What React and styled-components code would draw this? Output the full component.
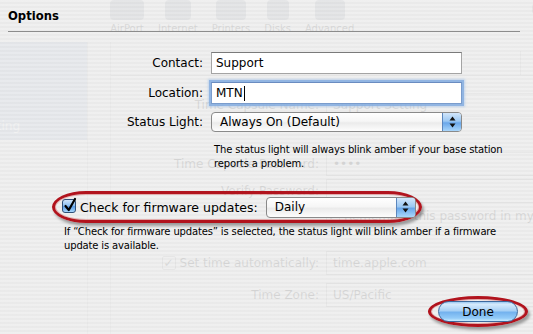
import React from 'react';
import styled, { createGlobalStyle } from 'styled-components';

const Global = createGlobalStyle`
  html, body { margin: 0; padding: 0; background: #ececec; }
  body { font-family: "DejaVu Sans", "Liberation Sans", sans-serif; }
`;

const Screen = styled.div`
  position: relative;
  width: 533px;
  height: 334px;
  overflow: hidden;
  font-family: "DejaVu Sans", "Liberation Sans", sans-serif;
  color: #000;
`;

/* ---------- window underneath the sheet (ghosted) ---------- */
const Window = styled.div`
  width: 533px;
  height: 334px;
  display: grid;
  grid-template-columns: 87px 23px 1fr;
  grid-template-rows: 42px 1fr;
  background: #e9e9e9;
  font-size: 12px;
`;

const Toolbar = styled.div`
  grid-column: 1 / -1;
  display: flex;
  padding-left: 110px;
`;

const ToolGroup = styled.div`
  display: flex;
  gap: 14px;
  align-items: flex-start;
`;

const Tool = styled.div`
  display: flex;
  flex-direction: column;
  align-items: center;
  gap: 3px;
  font-size: 10px;
`;

const ToolIcon = styled.div`
  width: ${p => p.$w}px;
  height: 20px;
  border-radius: 4px;
  background: #7d8796;
`;

const Search = styled.div`
  margin-left: auto;
  width: 50px;
  height: 16px;
  border-radius: 8px 0 0 8px;
  border: 1px solid #888;
  border-right: none;
  font-size: 11px;
  padding-left: 8px;
  display: flex;
  align-items: center;
  color: #555;
`;

const Sidebar = styled.div`
  grid-column: 1;
  align-self: start;
  height: 98px;
  background: #9fb3d4;
  display: flex;
  flex-direction: column;
  justify-content: flex-end;
  overflow: hidden;
`;

const SidebarItem = styled.div`
  height: 20px;
  margin-bottom: 4px;
  display: flex;
  align-items: center;
  justify-content: flex-end;
  padding-right: 67px;
  color: #fff;
  white-space: nowrap;
`;

const Gutter = styled.div`
  grid-column: 2;
  border-left: 1px solid #bbb;
`;

const Main = styled.div`
  grid-column: 3;
  border-left: 1px solid #bbb;
  display: flex;
  flex-direction: column;
`;

const TabStrip = styled.div`
  height: 33px;
  display: flex;
  justify-content: flex-end;
  align-items: flex-end;
  border-bottom: 1px solid #aaa;
  margin-bottom: -9px;
`;

const Tab = styled.div`
  width: 58px;
  height: 24px;
  border-left: 1px solid #aaa;
  font-size: 13px;
  display: flex;
  align-items: center;
  padding-left: 12px;
  color: #333;
`;

const GhostRow = styled.div`
  height: 24px;
  margin-top: ${p => p.$mt}px;
  display: grid;
  grid-template-columns: 208px 1fr;
  column-gap: 7px;
  align-items: center;
  font-size: 12px;
  white-space: nowrap;
`;

const GhostLabel = styled.div`
  text-align: right;
  display: flex;
  justify-content: flex-end;
  align-items: center;
  gap: 4px;
`;

const GhostField = styled.div`
  height: 22px;
  border: 1px solid #999;
  border-right: none;
  display: flex;
  align-items: center;
  padding-left: 6px;
`;

const GhostBox = styled.div`
  width: 12px;
  height: 12px;
  border: 1px solid #888;
  border-radius: 2px;
  font-size: 12px;
  line-height: 12px;
  text-align: center;
`;

/* ---------- the sheet ---------- */
const Sheet = styled.div`
  position: absolute;
  inset: 0;
  display: flex;
  flex-direction: column;
  background: repeating-linear-gradient(
    to bottom,
    rgba(240, 240, 240, 0.9) 0px,
    rgba(240, 240, 240, 0.9) 2px,
    rgba(234, 234, 234, 0.9) 2px,
    rgba(234, 234, 234, 0.9) 4px
  );
`;

const Title = styled.div`
  height: 31px;
  display: flex;
  align-items: center;
  padding-left: 8px;
  font-weight: bold;
  font-size: 11.6px;
`;

const Rule = styled.div`
  height: 1px;
  background: #8c8c8c;
  margin: 0 13px 0 8px;
`;

const Form = styled.div`
  display: grid;
  grid-template-columns: 203px 251px;
  column-gap: 8px;
  row-gap: 8px;
  margin-top: 20px;
  align-items: center;
`;

const Label = styled.div`
  text-align: right;
  font-size: 12px;
`;

const TextField = styled.div`
  height: 22px;
  box-sizing: border-box;
  background: #fff;
  border: 1px solid ${p => (p.$focused ? '#7a9ccc' : '#a4a4a4')};
  border-top-color: ${p => (p.$focused ? '#6a8cc0' : '#7a7a7a')};
  box-shadow: ${p => (p.$focused ? '0 0 0 2px rgba(128, 170, 222, 0.75), 0 0 2px 3px rgba(150, 190, 235, 0.5)' : 'none')};
  display: flex;
  align-items: center;
  padding-left: 4px;
  font-size: 12px;
`;

const Caret = styled.span`
  display: inline-block;
  width: 1px;
  height: 15px;
  background: #000;
  margin-left: 1px;
`;

const Popup = styled.div`
  height: ${p => p.$h}px;
  width: ${p => (p.$w ? `${p.$w}px` : 'auto')};
  box-sizing: border-box;
  border: 1px solid #8a8a8a;
  border-radius: 4px;
  background: linear-gradient(#ffffff, #f6f6f6 45%, #ebebeb 55%, #fdfdfd);
  display: flex;
  align-items: center;
  padding-left: ${p => p.$pl}px;
  font-size: 12px;
  overflow: hidden;
  flex: none;
`;

const Stepper = styled.div`
  margin-left: auto;
  width: 18px;
  align-self: stretch;
  border-left: 1px solid #5b86bd;
  background: linear-gradient(#d2e6fb, #9cc8f3 45%, #6aa7ea 55%, #a9d6fb);
  display: flex;
  align-items: center;
  justify-content: center;
`;

const Help = styled.div`
  font-size: 10px;
  letter-spacing: -0.15px;
  line-height: ${p => p.$lh}px;
  white-space: nowrap;
  padding-left: ${p => p.$pl || 0}px;
  margin-top: ${p => p.$mt || 0}px;
`;

const Callout = styled.div`
  box-sizing: border-box;
  width: ${p => p.$w}px;
  height: ${p => p.$h}px;
  margin-left: ${p => p.$ml || 0}px;
  margin-top: ${p => p.$mt || 0}px;
  border: 3px solid #b1131d;
  border-radius: ${p => p.$radius};
  box-shadow: 2px 3px 3px rgba(0, 0, 0, 0.35), inset 0 0 0 1px rgba(210, 60, 60, 0.35);
  display: flex;
  align-items: center;
  justify-content: ${p => p.$justify || 'flex-start'};
  padding-left: ${p => p.$pl || 0}px;
`;

const CheckBox = styled.div`
  width: 14px;
  height: 14px;
  box-sizing: border-box;
  border: 1px solid #2f4f78;
  border-radius: 3px;
  background: linear-gradient(#cfe4fb, #8fc0f1 45%, #5a9ce6 55%, #a6d5fb);
  position: relative;
  flex: none;
  margin-top: -2px;
`;

const CheckMark = styled.svg`
  position: absolute;
  left: 0;
  top: -3px;
`;

const CheckLabel = styled.span`
  font-size: 12.5px;
  margin-left: 4px;
  margin-right: 8px;
  white-space: nowrap;
`;

const Footer = styled.div`
  margin-top: auto;
  display: flex;
  justify-content: flex-end;
  padding: 0 5px 7px 0;
`;

const Button = styled.div`
  width: 80px;
  height: 21px;
  box-sizing: border-box;
  border: 1px solid #3d6a9e;
  border-radius: 11px;
  background: linear-gradient(#9cc8f0 0%, #d6ebfc 12%, #a7d0f5 46%, #73b2ee 54%, #93cbf8 85%, #c9ecff 100%);
  display: flex;
  align-items: center;
  justify-content: center;
  font-size: 12px;
  margin-left: 4px;
`;

const Arrows = () => (
  <svg width="7" height="12" viewBox="0 0 7 12">
    <path d="M3.5 0.5 L6.5 4.5 H0.5 Z M0.5 7.5 H6.5 L3.5 11.5 Z" fill="#111" />
  </svg>
);

export default function App() {
  return (
    <Screen>
      <Global />
      <Window>
        <Toolbar>
          <ToolGroup>
            <Tool><ToolIcon $w={34} />AirPort</Tool>
            <Tool><ToolIcon $w={26} />Internet</Tool>
            <Tool><ToolIcon $w={30} />Printers</Tool>
            <Tool><ToolIcon $w={22} />Disks</Tool>
            <Tool><ToolIcon $w={30} />Advanced</Tool>
          </ToolGroup>
          <Search>Q Settings</Search>
        </Toolbar>
        <Sidebar>
          <SidebarItem>Support Setting</SidebarItem>
        </Sidebar>
        <Gutter />
        <Main>
          <TabStrip>
            <Tab>Access</Tab>
          </TabStrip>
          <GhostRow $mt={26}>
            <GhostLabel>Time Capsule Name:</GhostLabel>
            <GhostField>Support Setting</GhostField>
          </GhostRow>
          <GhostRow $mt={35}>
            <GhostLabel>Time Capsule Password:</GhostLabel>
            <GhostField>••••</GhostField>
          </GhostRow>
          <GhostRow $mt={3}>
            <GhostLabel>Verify Password:</GhostLabel>
            <GhostField />
          </GhostRow>
          <GhostRow $mt={1}>
            <GhostLabel />
            <GhostLabel style={{ justifyContent: 'flex-start' }}>
              <GhostBox>✓</GhostBox>Remember this password in my keychain
            </GhostLabel>
          </GhostRow>
          <GhostRow $mt={23}>
            <GhostLabel><GhostBox>✓</GhostBox>Set time automatically:</GhostLabel>
            <GhostField>time.apple.com</GhostField>
          </GhostRow>
          <GhostRow $mt={8}>
            <GhostLabel>Time Zone:</GhostLabel>
            <GhostField>US/Pacific</GhostField>
          </GhostRow>
        </Main>
      </Window>

      <Sheet>
        <Title>Options</Title>
        <Rule />
        <Form>
          <Label>Contact:</Label>
          <TextField>Support</TextField>
          <Label>Location:</Label>
          <TextField $focused>MTN<Caret /></TextField>
          <Label>Status Light:</Label>
          <Popup $h={20} $pl={8}>
            Always On (Default)
            <Stepper><Arrows /></Stepper>
          </Popup>
          <span />
          <Help $lh={14} $pl={3} $mt={3}>
            The status light will always blink amber if your base station
            <br />
            reports a problem.
          </Help>
        </Form>

        <Callout $w={370} $h={32} $ml={52} $mt={20} $pl={7} $radius="34px / 50%">
          <CheckBox>
            <CheckMark width="14" height="16" viewBox="0 0 14 16">
              <path d="M2.5 9 L5.8 13 L12 2" fill="none" stroke="#000" strokeWidth="2.2" strokeLinecap="round" strokeLinejoin="round" />
            </CheckMark>
          </CheckBox>
          <CheckLabel>Check for firmware updates:</CheckLabel>
          <Popup $h={21} $w={150} $pl={8}>
            Daily
            <Stepper><Arrows /></Stepper>
          </Popup>
        </Callout>

        <Help $lh={13.5} $pl={64} $mt={2}>
          If “Check for firmware updates” is selected, the status light will blink amber if a firmware
          <br />
          update is available.
        </Help>

        <Footer>
          <Callout $w={100} $h={31} $radius="50%" $justify="flex-start" $pl={3}>
            <Button>Done</Button>
          </Callout>
        </Footer>
      </Sheet>
    </Screen>
  );
}
